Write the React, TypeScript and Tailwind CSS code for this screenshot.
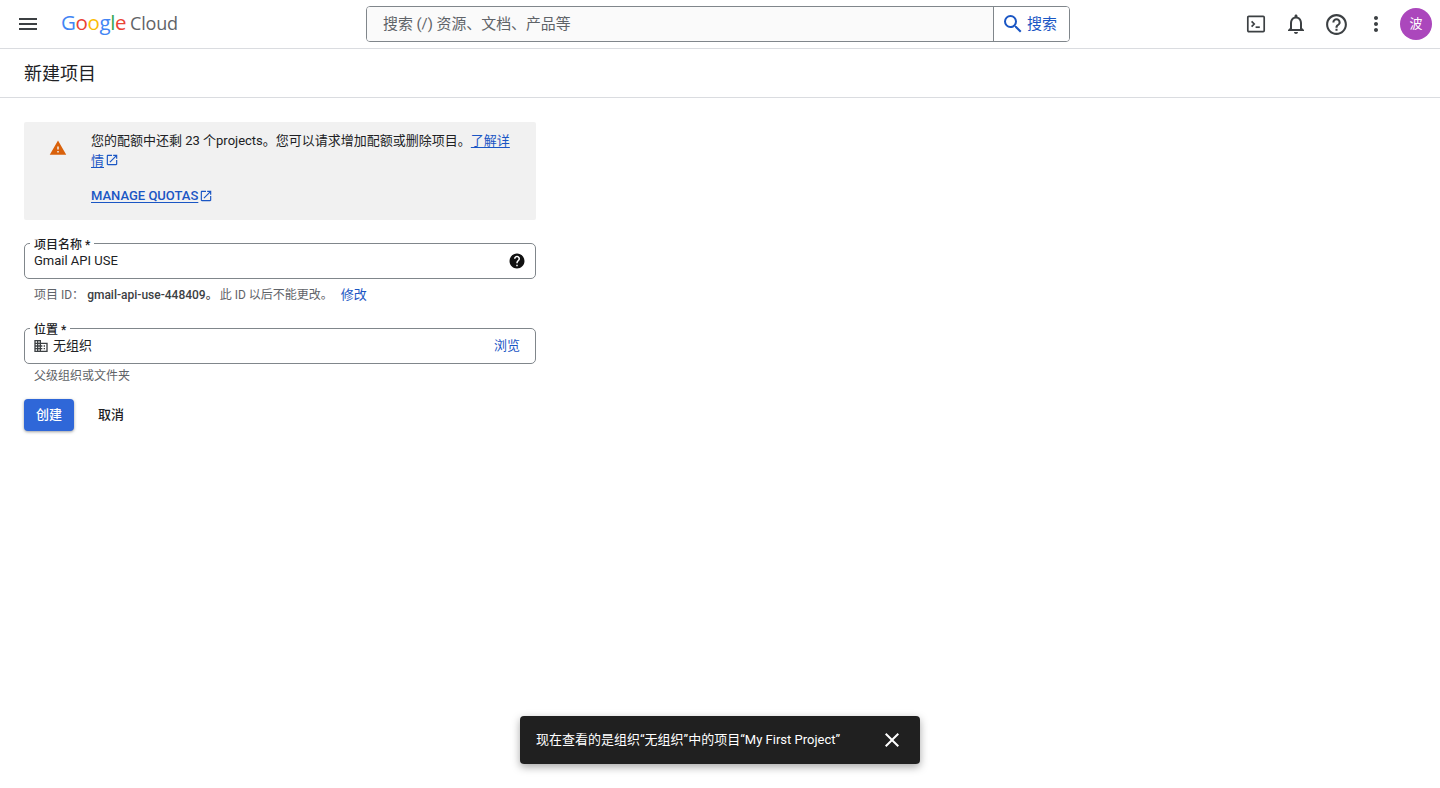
const font = { fontFamily: 'Roboto, "Noto Sans CJK SC", sans-serif' }

const paths = {
  menu: 'M3 18h18v-2H3v2zm0-5h18v-2H3v2zm0-7v2h18V6H3z',
  search:
    'M15.5 14h-.79l-.28-.27A6.471 6.471 0 0 0 16 9.5 6.5 6.5 0 1 0 9.5 16c1.61 0 3.09-.59 4.23-1.57l.27.28v.79l5 4.99L20.49 19l-4.99-5zm-6 0C7.01 14 5 11.99 5 9.5S7.01 5 9.5 5 14 7.01 14 9.5 11.99 14 9.5 14z',
  bell: 'M12 22c1.1 0 2-.9 2-2h-4c0 1.1.9 2 2 2zm6-6v-5c0-3.07-1.63-5.64-4.5-6.32V4c0-.83-.67-1.5-1.5-1.5s-1.5.67-1.5 1.5v.68C7.64 5.36 6 7.92 6 11v5l-2 2v1h16v-1l-2-2zm-2 1H8v-6c0-2.48 1.51-4.5 4-4.5s4 2.02 4 4.5v6z',
  helpOutline:
    'M11 18h2v-2h-2v2zm1-16C6.48 2 2 6.48 2 12s4.48 10 10 10 10-4.48 10-10S17.52 2 12 2zm0 18c-4.41 0-8-3.59-8-8s3.59-8 8-8 8 3.59 8 8-3.59 8-8 8zm0-14c-2.21 0-4 1.79-4 4h2c0-1.1.9-2 2-2s2 .9 2 2c0 2-3 1.75-3 5h2c0-2.25 3-2.5 3-5 0-2.21-1.79-4-4-4z',
  more: 'M12 8c1.1 0 2-.9 2-2s-.9-2-2-2-2 .9-2 2 .9 2 2 2zm0 2c-1.1 0-2 .9-2 2s.9 2 2 2 2-.9 2-2-.9-2-2-2zm0 6c-1.1 0-2 .9-2 2s.9 2 2 2 2-.9 2-2-.9-2-2-2z',
  close: 'M19 6.41L17.59 5 12 10.59 6.41 5 5 6.41 10.59 12 5 17.59 6.41 19 12 13.41 17.59 19 19 17.59 13.41 12z',
  openNew: 'M19 19H5V5h7V3H5c-1.11 0-2 .9-2 2v14c0 1.1.89 2 2 2h14c1.1 0 2-.9 2-2v-7h-2v7zM14 3v2h3.59l-9.83 9.83 1.41 1.41L19 6.41V10h2V3h-7z',
  warning: 'M1 21h22L12 2 1 21zm12-3h-2v-2h2v2zm0-4h-2v-4h2v4z',
  help: 'M12 2C6.48 2 2 6.48 2 12s4.48 10 10 10 10-4.48 10-10S17.52 2 12 2zm1 17h-2v-2h2v2zm2.07-7.75l-.9.92C13.45 12.9 13 13.5 13 15h-2v-.5c0-1.1.45-2.1 1.17-2.83l1.24-1.26c.37-.36.59-.86.59-1.41 0-1.1-.9-2-2-2s-2 .9-2 2H8c0-2.21 1.79-4 4-4s4 1.79 4 4c0 .88-.36 1.68-.93 2.25z',
  domain:
    'M12 7V3H2v18h20V7H12zM6 19H4v-2h2v2zm0-4H4v-2h2v2zm0-4H4V9h2v2zm0-4H4V5h2v2zm4 12H8v-2h2v2zm0-4H8v-2h2v2zm0-4H8V9h2v2zm0-4H8V5h2v2zm10 12h-8v-2h2v-2h-2v-2h2v-2h-2V9h8v10zm-2-8h-2v2h2v-2zm0 4h-2v2h2v-2z',
}

const Icon = ({ d, size = 24, color = '#3c4043', className }: { d: string; size?: number; color?: string; className?: string }) => (
  <svg width={size} height={size} viewBox="0 0 24 24" fill={color} className={className}>
    <path d={d} />
  </svg>
)

const TerminalIcon = () => (
  <svg width="20" height="20" viewBox="0 0 20 20" fill="none" stroke="#3c4043" strokeWidth="1.7">
    <rect x="1.8" y="2.4" width="16.4" height="15.2" rx="1" />
    <path d="M5.6 7.4 8.2 10l-2.6 2.6" />
    <path d="M9.6 13.2h4.2" />
  </svg>
)

const Logo = () => (
  <div className="mt-[-3px] flex items-baseline leading-none" style={{ fontFamily: '"Open Sans", sans-serif' }}>
    <div className="text-[20.5px] tracking-[-0.4px]">
      <span className="text-[#4285f4]">G</span>
      <span className="text-[#ea4335]">o</span>
      <span className="text-[#fbbc05]">o</span>
      <span className="text-[#4285f4]">g</span>
      <span className="text-[#34a853]">l</span>
      <span className="text-[#ea4335]">e</span>
    </div>
    <span className="ml-[4px] text-[18px] tracking-[-0.2px] text-[#5f6368]">Cloud</span>
  </div>
)

const Header = () => (
  <header className="flex h-[49px] items-center border-b border-[#dadce0] bg-white">
    <div className="flex w-[366px] shrink-0 items-center pl-[16px]">
      <Icon d={paths.menu} />
      <div className="ml-[21px]">
        <Logo />
      </div>
    </div>
    <div className="flex h-[36px] w-[704px] shrink-0 overflow-hidden rounded-[4px] border border-[#80868b]">
      <div className="flex flex-1 items-center bg-[#fafafa] pl-[16px] text-[14.9px] text-[#5f6368]">搜索 (/) 资源、文档、产品等</div>
      <div className="flex w-[76px] items-center gap-[2px] border-l border-[#80868b] bg-white pl-[7px] text-[15px] text-[#1a56c4]">
        <Icon d={paths.search} size={24} color="#1a56c4" />
        <span>搜索</span>
      </div>
    </div>
    <div className="flex flex-1 items-center justify-end pr-[8px]">
      <div className="flex w-[40px] justify-center">
        <TerminalIcon />
      </div>
      <div className="flex w-[40px] justify-center">
        <Icon d={paths.bell} />
      </div>
      <div className="flex w-[40px] justify-center">
        <Icon d={paths.helpOutline} size={25} />
      </div>
      <div className="flex w-[40px] justify-center">
        <Icon d={paths.more} />
      </div>
      <div className="ml-[4px] flex h-[32px] w-[32px] items-center justify-center rounded-full bg-[#ab47bc] text-[13px] text-white">波</div>
    </div>
  </header>
)

const Quota = () => (
  <div className="flex h-[98px] w-[512px] rounded-[2px] bg-[#f1f1f1] pt-[9px]">
    <div className="flex w-[67px] shrink-0 justify-center pt-[8px]">
      <Icon d={paths.warning} size={18} color="#d9610b" />
    </div>
    <div className="w-[425px] text-[13px] leading-[20px] text-[#202124]">
      <p>
        您的配额中还剩 23 个projects。您可以请求增加配额或删除项目。
        <a className="text-[#1a56c4] underline underline-offset-2">了解详情</a>
        <Icon d={paths.openNew} size={14} color="#1a56c4" className="ml-[1px] inline align-[-2px]" />
      </p>
      <p className="mt-[15px] flex items-center font-medium text-[#1a56c4]">
        <a className="underline underline-offset-2">MANAGE QUOTAS</a>
        <Icon d={paths.openNew} size={14} color="#1a56c4" className="ml-[1px]" />
      </p>
    </div>
  </div>
)

const Field = ({ label, children }: { label: string; children: React.ReactNode }) => (
  <fieldset className="flex h-[43px] w-[512px] items-center rounded-[5px] border border-[#80868b] px-[9px] pb-[7px]">
    <legend className="ml-[-4px] px-[4px] text-[12px] leading-[14px] font-medium text-[#202124]">
      <span className="relative top-[2px]">{label} *</span>
    </legend>
    <div className="flex h-[20px] w-full items-center text-[13px] text-[#202124]">{children}</div>
  </fieldset>
)

const Form = () => (
  <div className="mt-[16px]">
    <Field label="项目名称">
      <span className="flex-1">Gmail API USE</span>
      <Icon d={paths.help} size={18} color="#111" />
    </Field>
    <div className="mt-[7px] flex h-[18px] items-center pl-[10px] text-[12px] text-[#5f6368]">
      <span>项目 ID：</span>
      <span className="ml-[3px] font-medium text-[#3c4043]">gmail-api-use-448409。</span>
      <span className="ml-[2px]">此 ID 以后不能更改。</span>
      <a className="ml-[8px] text-[13px] text-[#1a56c4]">修改</a>
    </div>
    <div className="mt-[17px]">
      <Field label="位置">
        <Icon d={paths.domain} size={16} color="#3c4043" className="ml-[-1px]" />
        <span className="ml-[4px] flex-1">无组织</span>
        <a className="mr-[6px] text-[13px] text-[#1a56c4]">浏览</a>
      </Field>
    </div>
    <div className="flex h-[24px] items-center pl-[10px] text-[12px] text-[#5f6368]">父级组织或文件夹</div>
    <div className="mt-[11px] flex items-center">
      <button className="h-[32px] w-[50px] rounded-[4px] bg-[#2f67d8] text-[13px] font-medium text-white shadow-[0_1px_3px_rgba(60,64,67,0.5)]">创建</button>
      <button className="ml-[24px] text-[13px] font-medium text-[#202124]">取消</button>
    </div>
  </div>
)

const App = () => {
  return (
    <div className="relative h-[788px] overflow-hidden bg-white" style={font}>
      <Header />
      <div className="flex h-[49px] items-center border-b border-[#dadce0] px-[24px] text-[18px] text-[#202124]">新建项目</div>
      <div className="px-[24px] pt-[24px]">
        <Quota />
        <Form />
      </div>
      <div className="absolute top-[716px] left-[520px] flex h-[48px] w-[400px] items-center justify-between rounded-[4px] bg-[#202020] pr-[16px] pl-[16px] text-[13px] text-white shadow-[0_3px_8px_rgba(0,0,0,0.35)]">
        <span>现在查看的是组织“无组织”中的项目“My First Project”</span>
        <Icon d={paths.close} color="#fff" />
      </div>
    </div>
  )
}

export default App
